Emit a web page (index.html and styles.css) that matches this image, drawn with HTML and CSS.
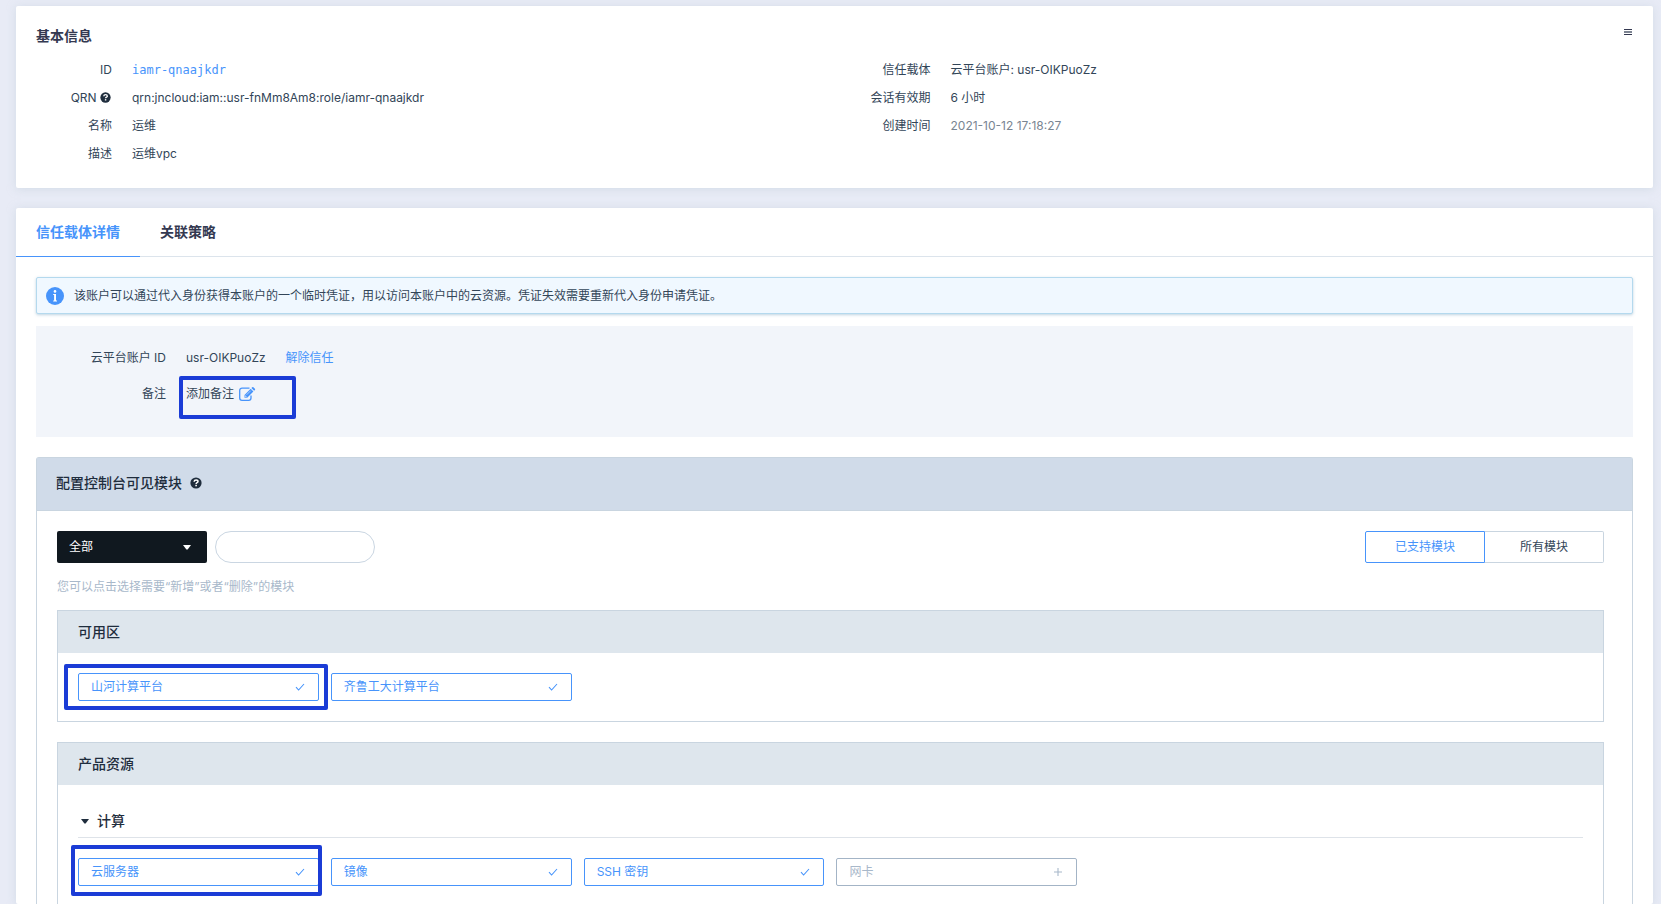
FILE: index.html
```html
<!DOCTYPE html>
<html lang="zh-CN">
<head>
<meta charset="utf-8">
<title>角色详情</title>
<link rel="stylesheet" href="styles.css">
</head>
<body>
<svg class="sprite" aria-hidden="true">
  <symbol id="help" viewBox="0 0 12 12"><circle cx="6" cy="6" r="5.6" fill="currentColor"/><path d="M4.1 4.7C4.2 3.5 5 2.9 6.1 2.9C7.2 2.9 8 3.5 8 4.5C8 5.7 6.1 5.6 6.1 6.9" fill="none" stroke="#fff" stroke-width="1.5"/><rect x="5.3" y="7.8" width="1.6" height="1.5" fill="#fff"/></symbol>
  <symbol id="check" viewBox="0 0 10 10"><path d="M1 5.2L3.6 8L9 2" fill="none" stroke="currentColor" stroke-width="1.1"/></symbol>
  <symbol id="plus" viewBox="0 0 10 10"><path d="M5 1V9M1 5H9" fill="none" stroke="currentColor" stroke-width="1.1"/></symbol>
  <symbol id="caret" viewBox="0 0 8 5"><path d="M0 0H8L4.6 4.5H3.4Z" fill="currentColor"/></symbol>
</svg>
<main class="page">
  <section class="card">
    <header class="card-head">
      <h2 class="title">基本信息</h2>
      <button class="menu" type="button" aria-label="更多操作"><svg width="8" height="6" viewBox="0 0 8 6"><path d="M0 0H8V1H0ZM0 5H8V6H0Z" fill="#343951"/><path d="M0 2H8V4H0Z" fill="#7d8492"/></svg></button>
    </header>
    <div class="info">
      <dl class="fields">
        <dt>ID</dt><dd><a class="link mono" href="#role">iamr-qnaajkdr</a></dd>
        <dt>QRN <svg class="help qrn-help" width="11" height="11"><use href="#help"/></svg></dt><dd>qrn:jncloud:iam::usr-fnMm8Am8:role/iamr-qnaajkdr</dd>
        <dt>名称</dt><dd>运维</dd>
        <dt>描述</dt><dd>运维vpc</dd>
      </dl>
      <dl class="fields">
        <dt>信任载体</dt><dd>云平台账户: usr-OIKPuoZz</dd>
        <dt>会话有效期</dt><dd>6 小时</dd>
        <dt>创建时间</dt><dd class="muted">2021-10-12 17:18:27</dd>
      </dl>
    </div>
  </section>

  <section class="card detail">
    <nav class="tabs">
      <a class="tab active" href="#carrier">信任载体详情</a>
      <a class="tab" href="#policy">关联策略</a>
    </nav>
    <div class="detail-body">
      <p class="alert">
        <svg width="18" height="18" viewBox="0 0 18 18"><circle cx="9" cy="9" r="9" fill="#4794fb"/><circle cx="9" cy="4.4" r="1.3" fill="#fff"/><path d="M7.2 7H10V13.4H11V14.4H7.2V13.4H8.1V8H7.2Z" fill="#fff"/></svg>
        <span>该账户可以通过代入身份获得本账户的一个临时凭证，用以访问本账户中的云资源。凭证失效需要重新代入身份申请凭证。</span>
      </p>
      <dl class="trust">
        <dt>云平台账户 ID</dt><dd><span>usr-OIKPuoZz</span><a class="link release" href="#release">解除信任</a></dd>
        <dt>备注</dt><dd class="marked"><span>添加备注</span><button class="edit" type="button" aria-label="编辑备注"><svg width="17" height="14" viewBox="0 0 17 14"><path d="M10.5 1.1H3A2.3 2.3 0 0 0 .7 3.4V11A2.3 2.3 0 0 0 3 13.3H9.7A2.3 2.3 0 0 0 12 11V8.6" fill="none" stroke="currentColor" stroke-width="1.3"/><path d="M5.5 10.7V7.9L11.7 1.7L14.4 4.4L8.2 10.7ZM12.4 1L13.2 .3Q13.8 -.2 14.4 .3L15.9 1.8Q16.4 2.4 15.9 3L15.1 3.7Z" fill="currentColor"/><path d="M7.6 7.8L11.7 3.7M6.4 8.4V9.8H7.8" fill="none" stroke="#f2f5fa" stroke-width=".6"/></svg></button><span class="mark mark-note"></span></dd>
      </dl>

      <section class="config">
        <h2 class="config-head">配置控制台可见模块 <svg class="help" width="12" height="12"><use href="#help"/></svg></h2>
        <div class="config-body">
          <div class="toolbar">
            <div class="select"><select aria-label="模块分类"><option>全部</option></select><svg class="select-caret" width="8" height="5"><use href="#caret"/></svg></div>
            <input class="search" type="text" aria-label="搜索模块">
            <div class="toggle"><button class="toggle-item on" type="button">已支持模块</button><button class="toggle-item" type="button">所有模块</button></div>
          </div>
          <p class="hint">您可以点击选择需要“新增”或者“删除”的模块</p>
          <section class="panel">
            <h3 class="panel-head">可用区</h3>
            <div class="modules">
              <div class="marked"><button class="module" type="button">山河计算平台<svg width="10" height="10"><use href="#check"/></svg></button><span class="mark mark-zone"></span></div>
              <button class="module" type="button">齐鲁工大计算平台<svg width="10" height="10"><use href="#check"/></svg></button>
            </div>
          </section>
          <section class="panel last">
            <h3 class="panel-head">产品资源</h3>
            <h4 class="group"><svg width="8" height="5"><use href="#caret"/></svg>计算</h4>
            <div class="modules">
              <div class="marked"><button class="module" type="button">云服务器<svg width="10" height="10"><use href="#check"/></svg></button><span class="mark mark-server"></span></div>
              <button class="module" type="button">镜像<svg width="10" height="10"><use href="#check"/></svg></button>
              <button class="module" type="button">SSH 密钥<svg width="10" height="10"><use href="#check"/></svg></button>
              <button class="module off" type="button">网卡<svg width="10" height="10"><use href="#plus"/></svg></button>
            </div>
          </section>
        </div>
      </section>
    </div>
  </section>
</main>
</body>
</html>
```
FILE: styles.css
```css
* { box-sizing: border-box; }
body {
  margin: 0;
  background: #e8ebf6;
  color: #324558;
  font: 12px/20px Inter, "Noto Sans CJK SC", sans-serif;
}
h2, h3, h4, p, dl, dd { margin: 0; }
a { text-decoration: none; }
button, input, select { font: inherit; color: inherit; margin: 0; }
button { cursor: pointer; }
svg { flex: none; }
.sprite { position: absolute; width: 0; height: 0; }

.page {
  min-height: 100vh;
  display: flex;
  flex-direction: column;
  gap: 20px;
  padding: 6px 8px 0 16px;
}
.card {
  background: #fff;
  border-radius: 2px;
  box-shadow: 0 1px 8px rgba(190, 205, 215, .5);
}
.card-head {
  display: flex;
  justify-content: space-between;
  padding: 20px 20px 0;
}
.title { font-size: 14px; font-weight: 600; color: #343951; }
.menu { display: flex; align-self: flex-start; border: 0; background: none; padding: 3px 1px; }
.info {
  display: grid;
  grid-template-columns: 1fr 1fr;
  padding: 10px 0 20px;
}
.fields {
  display: grid;
  grid-template-columns: 96px 1fr;
  grid-auto-rows: 28px;
  column-gap: 20px;
  align-content: start;
  line-height: 28px;
}
.fields dt, .trust dt { text-align: right; white-space: nowrap; }
.help { vertical-align: -1px; color: #1f2d3d; }
.qrn-help { margin-right: 1px; }
.link { color: #4794fb; }
.mono { font-family: "DejaVu Sans Mono", monospace; }
.muted { color: #798592; }

.detail, .detail-body, .config, .config-body, .last {
  flex: 1;
  display: flex;
  flex-direction: column;
}
.tabs { display: flex; height: 49px; border-bottom: 1px solid #dce4ec; }
.tab {
  height: 49px;
  padding: 0 20px;
  font-size: 14px;
  font-weight: 600;
  line-height: 48px;
  color: #343951;
}
.tab.active { color: #4794fb; border-bottom: 1px solid #4794fb; }
.detail-body { padding: 20px 20px 0; }
.alert {
  display: flex;
  align-items: center;
  gap: 10px;
  padding: 8px 9px 7px;
  border: 1px solid #b4d9ee;
  border-radius: 2px;
  background: #f0f8ff;
  box-shadow: 0 1px 3px rgba(70, 130, 170, .35);
}
.trust {
  display: grid;
  grid-template-columns: 130px 1fr;
  column-gap: 20px;
  row-gap: 16px;
  margin: 12px 0 20px;
  padding: 22px 0 33px;
  background: #f2f5fa;
}
.trust dd { display: flex; align-items: center; justify-self: start; }
.release { margin-left: 20px; }
.edit { display: flex; padding: 0; margin-left: 5px; border: 0; background: none; color: #4794fb; }

.config { border: 1px solid #c9d5e0; border-bottom: 0; border-radius: 3px 3px 0 0; }
.config-head {
  padding: 15px 19px 17px;
  border-bottom: 1px solid #c9d5e0;
  background: #d0dbe9;
  color: #1f2d3d;
  font-size: 14px;
  font-weight: 500;
}
.config-head .help { margin-left: 4px; }
.config-body { padding: 20px 28px 0 20px; }
.toolbar { display: flex; gap: 8px; height: 32px; }
.select { position: relative; width: 150px; color: #fff; }
.select select {
  width: 100%;
  height: 32px;
  padding: 0 12px;
  border: 0;
  border-radius: 2px;
  background: #10181f;
  appearance: none;
}
.select-caret { position: absolute; right: 16px; top: 14px; pointer-events: none; }
.search { width: 160px; padding: 0 15px; border: 1px solid #cad6e2; border-radius: 16px; background: #fff; }
.toggle { display: flex; margin-left: auto; }
.toggle-item {
  width: 119px;
  border: 1px solid #c9d5e0;
  border-left: 0;
  border-radius: 0 2px 2px 0;
  background: #fff;
}
.toggle-item.on { width: 120px; border: 1px solid #4794fb; border-radius: 2px 0 0 2px; color: #4794fb; }
.hint { margin: 14px 0 13px; color: #a8b8ca; }

.panel { margin-bottom: 20px; border: 1px solid #c9d5e0; }
.panel-head {
  padding: 11px 20px;
  background: #dee6ed;
  color: #1f2d3d;
  font-size: 14px;
  font-weight: 500;
}
.modules {
  display: grid;
  grid-template-columns: repeat(6, 1fr);
  gap: 12px;
  padding: 20px;
}
.module {
  display: flex;
  align-items: center;
  justify-content: space-between;
  width: 100%;
  height: 28px;
  padding: 0 13px 0 12px;
  border: 1px solid #4794fb;
  border-radius: 2px;
  background: #fff;
  color: #4794fb;
}
.module.off { border-color: #a3b4c6; color: #a8b8ca; }
.last { margin-bottom: 0; border-bottom: 0; }
.last .modules { padding-bottom: 12px; }
.group {
  display: flex;
  align-items: center;
  gap: 8px;
  margin: 26px 20px 0;
  padding: 0 3px 6px;
  border-bottom: 1px solid #dee3e9;
  color: #1f2d3d;
  font-size: 14px;
  font-weight: 500;
}

.marked { position: relative; }
.mark { position: absolute; border: 4px solid #1b3cd6; border-radius: 2px; pointer-events: none; }
.mark-note { left: -7px; top: -8px; width: 117px; height: 43px; }
.mark-zone { inset: -9px -9px -9px -14px; }
.mark-server { inset: -13px -3px -10px -7px; }
```
